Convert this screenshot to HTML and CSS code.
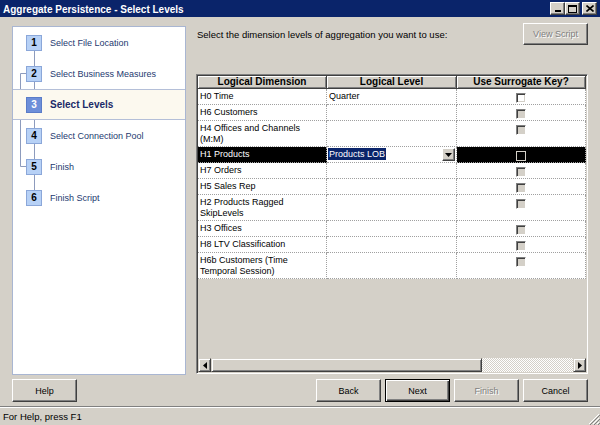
FILE: index.html
```html
<!DOCTYPE html>
<html>
<head>
<meta charset="utf-8">
<link rel="stylesheet" href="styles.css">
</head>
<body>
<div class="window">
  <div class="titlebar">
    <span class="title">Aggregate Persistence - Select Levels</span>
    <div class="caption-btns">
      <span class="cbtn"><svg width="8" height="7" viewBox="0 0 8 7"><rect x="1" y="5" width="6" height="2" fill="#000"/></svg></span>
      <span class="cbtn"><svg width="9" height="8" viewBox="0 0 9 8"><rect x="0.5" y="0.5" width="8" height="7" fill="none" stroke="#000"/><rect x="0" y="0" width="9" height="2" fill="#000"/></svg></span>
      <span class="cbtn close"><svg width="8" height="7" viewBox="0 0 8 7"><path d="M0.5 0.5 L7.5 6.5 M7.5 0.5 L0.5 6.5" stroke="#000" stroke-width="1.6"/></svg></span>
    </div>
  </div>

  <div class="main">
    <div class="steps">
      <svg class="connector" width="30" height="200" viewBox="0 0 30 200">
        <path d="M21.5 15 V170" stroke="#8d9bbd" stroke-width="1" fill="none"/>
        <path d="M13 46.5 H7.5 V139.5 H13" stroke="#8d9bbd" stroke-width="1" fill="none"/>
      </svg>
      <div class="step"><span class="num">1</span><span class="label">Select File Location</span></div>
      <div class="step"><span class="num">2</span><span class="label">Select Business Measures</span></div>
      <div class="step active"><span class="num">3</span><span class="label">Select Levels</span></div>
      <div class="step"><span class="num">4</span><span class="label">Select Connection Pool</span></div>
      <div class="step"><span class="num">5</span><span class="label">Finish</span></div>
      <div class="step"><span class="num">6</span><span class="label">Finish Script</span></div>
    </div>

    <div class="right">
      <div class="intro">
        <span class="intro-text">Select the dimension levels of aggregation you want to use:</span>
        <span class="btn disabled">View Script</span>
      </div>
      <div class="frame">
        <div class="grid">
          <div class="hcell">Logical Dimension</div>
          <div class="hcell">Logical Level</div>
          <div class="hcell">Use Surrogate Key?</div>

          <div class="cell">H0 Time</div>
          <div class="cell">Quarter</div>
          <div class="cell"><span class="chk on"></span></div>

          <div class="cell">H6 Customers</div>
          <div class="cell"></div>
          <div class="cell"><span class="chk"></span></div>

          <div class="cell">H4 Offices and Channels<br>(M:M)</div>
          <div class="cell"></div>
          <div class="cell"><span class="chk"></span></div>

          <div class="cell sel">H1 Products</div>
          <div class="cell combo"><span class="combo-text">Products LOB</span><span class="combo-btn"><svg width="7" height="4" viewBox="0 0 7 4"><path d="M0 0 H7 L3.5 4 Z" fill="#000"/></svg></span></div>
          <div class="cell sel"><span class="chk dark"></span></div>

          <div class="cell">H7 Orders</div>
          <div class="cell"></div>
          <div class="cell"><span class="chk"></span></div>

          <div class="cell">H5 Sales Rep</div>
          <div class="cell"></div>
          <div class="cell"><span class="chk"></span></div>

          <div class="cell">H2 Products Ragged<br>SkipLevels</div>
          <div class="cell"></div>
          <div class="cell"><span class="chk"></span></div>

          <div class="cell">H3 Offices</div>
          <div class="cell"></div>
          <div class="cell"><span class="chk"></span></div>

          <div class="cell">H8 LTV Classification</div>
          <div class="cell"></div>
          <div class="cell"><span class="chk"></span></div>

          <div class="cell">H6b Customers (Time<br>Temporal Session)</div>
          <div class="cell"></div>
          <div class="cell"><span class="chk"></span></div>
        </div>
        <div class="filler"></div>
        <div class="hscroll">
          <span class="sbtn"><svg width="4" height="7" viewBox="0 0 4 7"><path d="M4 0 V7 L0 3.5 Z" fill="#000"/></svg></span>
          <span class="thumb"></span>
          <span class="track"></span>
          <span class="sbtn"><svg width="4" height="7" viewBox="0 0 4 7"><path d="M0 0 V7 L4 3.5 Z" fill="#000"/></svg></span>
        </div>
      </div>
    </div>
  </div>

  <div class="buttons">
    <span class="btn help">Help</span>
    <span class="btn">Back</span>
    <span class="btn default">Next</span>
    <span class="btn disabled">Finish</span>
    <span class="btn">Cancel</span>
  </div>

  <div class="status">
    <span class="status-text">For Help, press F1</span>
    <svg class="grip" width="12" height="12" viewBox="0 0 12 12">
      <path d="M11 1 L1 11 M11 5 L5 11 M11 9 L9 11" stroke="#fff" stroke-width="1"/>
      <path d="M12 2 L2 12 M12 6 L6 12 M12 10 L10 12" stroke="#808080" stroke-width="1"/>
    </svg>
  </div>
</div>
</body>
</html>
```

FILE: styles.css
```css
body {
  margin: 0;
  width: 600px;
  height: 425px;
  overflow: hidden;
  background: #d4d0c8;
  font-family: "Liberation Sans", Arial, sans-serif;
  font-size: 9px;
  color: #000;
}

.window {
  display: flex;
  flex-direction: column;
  height: 425px;
}

.titlebar {
  height: 17px;
  flex: none;
  background: #0a246a;
  display: flex;
  align-items: center;
  justify-content: space-between;
  padding: 0 3px 0 3px;
}

.title {
  color: #fff;
  font-weight: bold;
  font-size: 10px;
  padding-top: 1px;
}

.caption-btns {
  display: flex;
}

.cbtn {
  width: 15px;
  height: 13px;
  box-sizing: border-box;
  background: #d4d0c8;
  border: 1px solid;
  border-color: #fff #404040 #404040 #fff;
  box-shadow: inset -1px -1px #808080;
  display: flex;
  align-items: center;
  justify-content: center;
}

.cbtn.close {
  margin-left: 2px;
}

.main {
  display: flex;
  gap: 10px;
  padding: 6px 12px 0 12px;
  height: 358px;
  box-sizing: border-box;
  flex: none;
}

.steps {
  width: 174px;
  height: 349px;
  box-sizing: border-box;
  margin-top: 3px;
  background: #fff;
  border: 1px solid #a9b6d2;
  position: relative;
}

.connector {
  position: absolute;
  left: 0;
  top: 0;
}

.step {
  height: 31px;
  box-sizing: border-box;
  border-top: 1px solid transparent;
  border-bottom: 1px solid transparent;
  display: flex;
  align-items: center;
  padding-left: 13px;
  gap: 8px;
  position: relative;
  color: #24396f;
}

.step.active {
  background: #fcf9ef;
  border-top-color: #b4bfd8;
  border-bottom-color: #b4bfd8;
}

.num {
  width: 16px;
  height: 16px;
  box-sizing: border-box;
  background: #b7d1f6;
  border: 1px solid #8ba7d9;
  display: flex;
  align-items: center;
  justify-content: center;
  font-weight: bold;
  font-size: 10px;
  color: #000;
}

.step.active .num {
  background: #6d8fd9;
  border-color: #5a7cc8;
  color: #fff;
}

.label {
  font-size: 9px;
}

.step.active .label {
  font-weight: bold;
  font-size: 10px;
  color: #1b2a68;
}

.right {
  width: 392px;
  display: flex;
  flex-direction: column;
}

.intro {
  height: 51px;
  display: flex;
  justify-content: space-between;
  align-items: flex-start;
}

.intro-text {
  font-size: 9.5px;
  padding-top: 6px;
  padding-left: 1px;
}

.btn {
  width: 65px;
  height: 23px;
  box-sizing: border-box;
  background: #d4d0c8;
  border: 1px solid;
  border-color: #fff #404040 #404040 #fff;
  box-shadow: inset -1px -1px #808080;
  display: flex;
  align-items: center;
  justify-content: center;
  font-size: 9px;
}

.intro .btn {
  height: 22px;
}

.btn.disabled {
  color: #808080;
  text-shadow: 1px 1px #fff;
}

.btn.default {
  border: 1px solid #000;
  box-shadow: inset 1px 1px #fff, inset -1px -1px #404040, inset -2px -2px #808080;
}

.frame {
  height: 300px;
  box-sizing: border-box;
  border: 1px solid;
  border-color: #808080 #fff #fff #808080;
  box-shadow: inset 1px 1px #404040, inset -1px -1px #d4d0c8;
  padding: 1px;
  background: #d4d0c8;
  display: flex;
  flex-direction: column;
}

.grid {
  display: grid;
  grid-template-columns: 129px 130px 129px;
}

.hcell {
  height: 13px;
  box-sizing: border-box;
  background: #d4d0c8;
  border-right: 1px solid #404040;
  border-bottom: 1px solid #404040;
  box-shadow: inset 1px 1px #fff, inset -1px -1px #808080;
  font-weight: bold;
  font-size: 10px;
  line-height: 12px;
  text-align: center;
}

.cell {
  background: #fff;
  min-height: 16px;
  box-sizing: border-box;
  padding: 2px 2px 1px 2px;
  line-height: 11px;
  border-right: 1px dotted #a0a0a0;
  border-bottom: 1px dotted #a0a0a0;
}

.cell.sel {
  background: #000;
  color: #fff;
}

.cell.combo {
  display: flex;
  align-items: flex-start;
  padding: 1px 1px 1px 1px;
}

.combo-text {
  background: #0a246a;
  color: #fff;
  padding: 1px 1px 0 1px;
  line-height: 11px;
}

.combo-btn {
  margin-left: auto;
  width: 13px;
  height: 13px;
  box-sizing: border-box;
  background: #d4d0c8;
  border: 1px solid;
  border-color: #fff #404040 #404040 #fff;
  box-shadow: inset -1px -1px #808080;
  display: flex;
  align-items: center;
  justify-content: center;
}

.chk {
  display: block;
  width: 10px;
  height: 10px;
  box-sizing: border-box;
  margin: 2px auto 0;
  background: #d4d0c8;
  border: 1px solid;
  border-color: #808080 #fff #fff #808080;
  box-shadow: inset 1px 1px #404040, inset -1px -1px #d4d0c8;
}

.chk.on {
  background: #fff;
}

.chk.dark {
  background: #000;
  border-color: #d4d0c8;
  box-shadow: none;
}

.filler {
  flex: 1;
}

.hscroll {
  height: 14px;
  display: flex;
  flex: none;
}

.sbtn {
  width: 13px;
  height: 14px;
  box-sizing: border-box;
  background: #d4d0c8;
  border: 1px solid;
  border-color: #d4d0c8 #404040 #404040 #d4d0c8;
  box-shadow: inset 1px 1px #fff, inset -1px -1px #808080;
  display: flex;
  align-items: center;
  justify-content: center;
}

.thumb {
  width: 271px;
  height: 14px;
  box-sizing: border-box;
  background: #d4d0c8;
  border: 1px solid;
  border-color: #d4d0c8 #404040 #404040 #d4d0c8;
  box-shadow: inset 1px 1px #fff, inset -1px -1px #808080;
}

.track {
  flex: 1;
  height: 14px;
  background-color: #d4d0c8;
  background-image: repeating-conic-gradient(#fff 0 25%, #d4d0c8 0 50%);
  background-size: 2px 2px;
}

.buttons {
  display: flex;
  gap: 4px;
  padding: 4px 12px 0 12px;
  flex: none;
}

.btn.help {
  margin-right: auto;
}

.status {
  margin-top: 4px;
  flex: 1;
  border-top: 1px solid #808080;
  box-shadow: inset 0 1px #fff;
  display: flex;
  align-items: center;
  padding-left: 3px;
  font-size: 9.5px;
}

.status-text {
  padding-top: 1px;
}

.grip {
  margin-left: auto;
  align-self: flex-end;
}
```
